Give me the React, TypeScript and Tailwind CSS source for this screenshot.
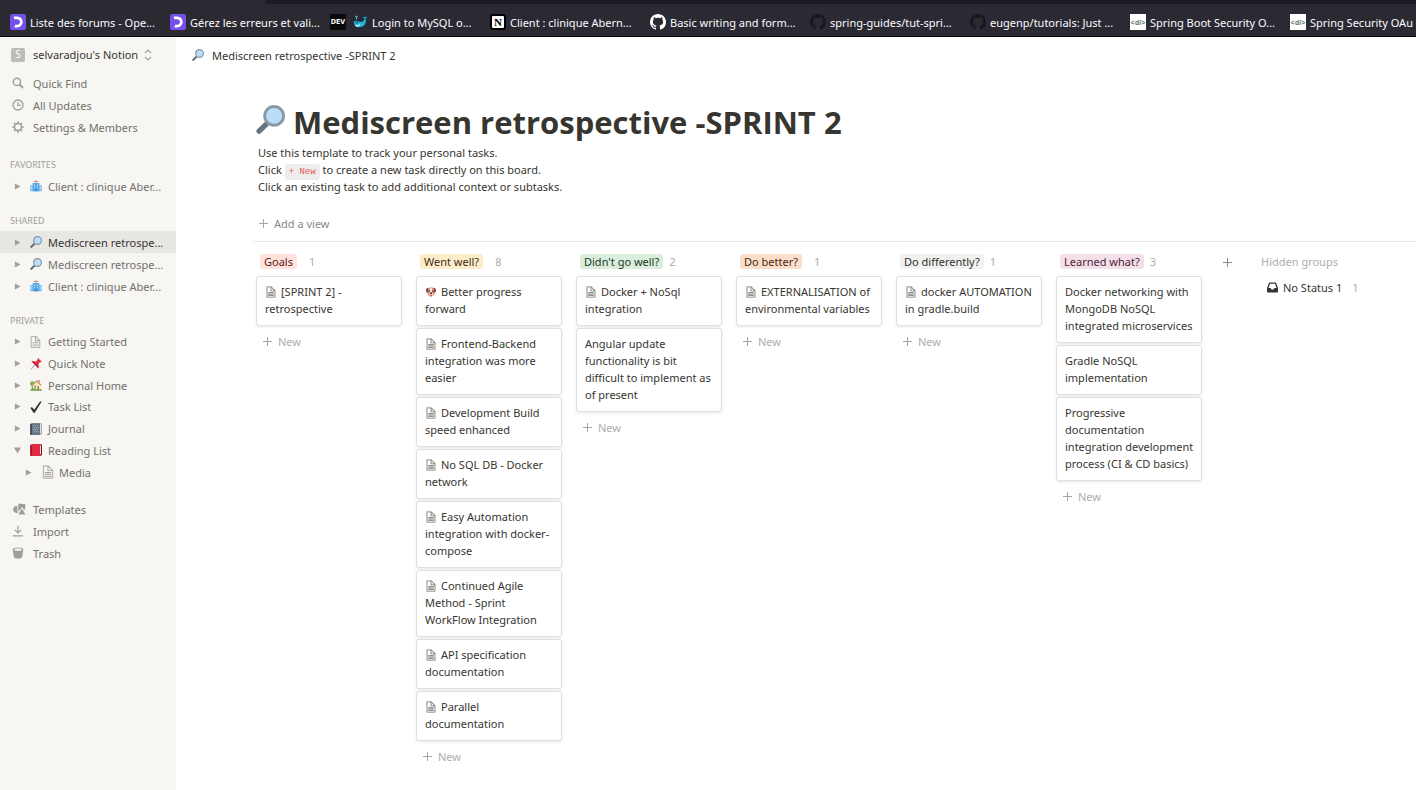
import type { ReactNode } from "react";

const PageIcon = ({ className }: { className: string }) => (
  <svg viewBox="0 0 30 30" className={className} aria-hidden="true">
    <path d="M16,1H4v28h22V11L16,1z M16,3.828L23.172,11H16V3.828z M24,27H6V3h8v10h10V27z M8,17h14v-2H8V17z M8,21h14v-2H8V21z M8,25h14v-2H8V25z" />
  </svg>
);

const Magnifier = ({ className = "size-3" }: { className?: string }) => (
  <svg viewBox="0 0 28 28" className={className} aria-hidden="true">
    <path d="M9.5 16.2l2.3 2.3-1.4 1.6-2.6-2.4z" fill="#8899a6" />
    <path d="M3 25.2l6.3-6" stroke="#66757f" strokeWidth="5.2" strokeLinecap="round" />
    <circle cx="17.5" cy="10.5" r="9.1" fill="#bbddf5" stroke="#8899a6" strokeWidth="2.8" />
  </svg>
);

const Hospital = () => (
  <svg viewBox="0 0 36 36" className="size-3" aria-hidden="true">
    <path d="M0 15h11v19H0zM25 15h11v19H25z" fill="#8cc4f0" />
    <path d="M8 9h20v25H8z" fill="#5aa9e6" />
    <path d="M17 0h2v10h-2z" fill="#8899a6" />
    <path d="M11 3h14v2.500H11z" fill="#e0707c" />
    <path d="M12 14h3v3h-3zM21 14h3v3h-3zM12 20h3v3h-3zM21 20h3v3h-3zM3 19h3v3H3zM3 25h3v3H3zM30 19h3v3h-3zM30 25h3v3h-3z" fill="#d6ecfb" />
    <path d="M15 27h6v7h-6z" fill="#3b88c3" />
  </svg>
);

const Pushpin = () => (
  <svg viewBox="0 0 36 36" className="size-3" aria-hidden="true">
    <path d="M3 34L16 19" stroke="#99aab5" strokeWidth="3" strokeLinecap="round" />
    <path d="M4 10c5-2 10-1 13 1l6-6c-1-2 0-4 1-5l12 12c-2 1-4 1-6 0l-5 7c2 4 2 9 0 13z" fill="#dd2e44" />
    <path d="M10 12l13 13" stroke="#be1931" strokeWidth="3" />
  </svg>
);

const House = () => (
  <svg viewBox="0 0 36 36" className="size-3" aria-hidden="true">
    <circle cx="7" cy="14" r="7" fill="#77b255" />
    <path d="M5 16h4v18H5z" fill="#77b255" />
    <path d="M9 17L20 7l12 10v17H9z" fill="#ffe8b6" />
    <path d="M5 18L20 3l15 14-3 3L20 9 8 20z" fill="#c1a06a" />
    <path d="M25 3h5v9l-5-4z" fill="#d99e82" />
    <path d="M13 20h5v5h-5z" fill="#3b88c3" />
    <path d="M22 22h5v10h-5z" fill="#a8785a" />
    <path d="M1 31h34v4H1z" fill="#5c913b" />
    <circle cx="14" cy="30" r="4" fill="#77b255" />
  </svg>
);

const Check = () => (
  <svg viewBox="0 0 36 36" className="size-3" aria-hidden="true">
    <path d="M34.500 2.500L15 34.500c-1 1.500-4 1.500-5 0L2 22.500c-1-2 2.500-5 5-3l6 6L29.500 2.500c1.500-2 6-2 5 0z" fill="#31373d" />
  </svg>
);

const Book = ({ kind }: { kind: "journal" | "reading" }) => {
  const journal = kind === "journal";
  return (
    <svg viewBox="0 0 36 36" className="size-3" aria-hidden="true">
      <path d="M6 1h27c2 0 3 1 3 3v27c0 3-2 4-4 4H6z" fill={journal ? "#99aab5" : "#a0041e"} />
      <path d="M29 5l4-1v25l-4 3z" fill="#e1e8ed" />
      <path d="M1 4c0-2 1-3 3-3h26v31c0 2-1 4-3 4H4c-2 0-3-1-3-3z" fill={journal ? "#66757f" : "#dd2e44"} />
      <path d="M1 4h4v32H4c-2 0-3-1-3-3z" fill={journal ? "#31373d" : "#a0041e"} />
      {journal && (
        <path d="M8 7h3v3H8zM14 7h3v3h-3zM20 7h3v3h-3zM11 13h3v3h-3zM17 13h3v3h-3zM23 13h3v3h-3zM8 19h3v3H8zM14 19h3v3h-3zM20 19h3v3h-3zM11 25h3v3h-3zM17 25h3v3h-3zM23 25h3v3h-3z" fill="#b8c6d1" />
      )}
    </svg>
  );
};

const Dog = () => (
  <svg viewBox="0 0 36 36" className="mr-[5px] ml-px inline size-2.5 align-[-1px]" aria-hidden="true">
    <path d="M6 5c6-5 18-5 24 0l2 14c0 9-7 16-14 16S4 28 4 19z" fill="#dd8f74" />
    <path d="M15 2h6l2 14-5 4-5-4z" fill="#f5e3d8" />
    <path d="M7 4C2 3 0 9 0 14c0 4 3 7 5 5 3-3 5-10 2-15zM29 4c5-1 7 5 7 10 0 4-3 7-5 5-3-3-5-10-2-15z" fill="#8e3e36" />
    <ellipse cx="18" cy="26" rx="8" ry="8" fill="#f5d3c4" />
    <circle cx="11" cy="15" r="2.600" fill="#292f33" />
    <circle cx="25" cy="15" r="2.600" fill="#292f33" />
    <path d="M13 20h10l-3 5h-4z" fill="#292f33" />
    <path d="M15 28h6v3c0 4-6 4-6 0z" fill="#dd2e44" />
  </svg>
);

const Plus = ({ className = "size-[9px] stroke-[#a5a4a1]" }: { className?: string }) => (
  <svg viewBox="0 0 9 9" className={className} aria-hidden="true">
    <path d="M4.500 0v9M0 4.500h9" />
  </svg>
);

const Caret = ({ open = false }: { open?: boolean }) => (
  <svg viewBox="0 0 8 8" className="size-[7px] fill-[#a09f9b]" aria-hidden="true">
    {open ? <path d="M0 .5h8L4 7.500z" /> : <path d="M1 .5v7L7.500 4z" />}
  </svg>
);

const SearchIcon = () => (
  <svg viewBox="0 0 12 12" className="size-3" fill="none" stroke="#9f9e9a" aria-hidden="true">
    <circle cx="4.900" cy="4.900" r="3.600" strokeWidth="1.500" />
    <path d="M7.600 7.600l3.400 3.400" strokeWidth="1.900" />
  </svg>
);
const ClockIcon = () => (
  <svg viewBox="0 0 12 12" className="size-3" fill="none" stroke="#9f9e9a" strokeWidth="1.300" aria-hidden="true">
    <circle cx="6" cy="6" r="5" />
    <path d="M6 3v3.300h2.800" />
  </svg>
);
const GearIcon = () => (
  <svg viewBox="0 0 12 12" className="size-3" fill="none" stroke="#9f9e9a" aria-hidden="true">
    <circle cx="6" cy="6" r="3.500" strokeWidth="1.500" />
    <path d="M6 .3v2M6 9.700v2M.3 6h2M9.700 6h2M2 2l1.400 1.400M8.600 8.600L10 10M2 10l1.400-1.400M8.600 3.400L10 2" strokeWidth="1.700" />
  </svg>
);
const TemplatesIcon = () => (
  <svg viewBox="0 0 14 12" className="h-3 w-3.5 fill-[#9f9e9a]" aria-hidden="true">
    <path d="M6.500.6l7 .6-.4 5.300-1.200.1-2-2.600-2.300 3.500-1.700-.2z" />
    <path d="M5.300 3v5.300h1.300L5.700 9.700A3.500 3.500 0 1 1 5.300 3z" />
    <path d="M9.900 5.600l3.600 5.900H6.300z" />
  </svg>
);
const ImportIcon = () => (
  <svg viewBox="0 0 12 12" className="size-3" fill="none" stroke="#9f9e9a" strokeWidth="1.200" aria-hidden="true">
    <path d="M6 .8v7M2.800 4.900L6 8l3.200-3.100M.8 10.800h10.400" />
  </svg>
);
const TrashIcon = () => (
  <svg viewBox="0 0 12 12" className="size-3 fill-[#9f9e9a]" aria-hidden="true">
    <path fillRule="evenodd" d="M6 .4c3 0 5.300.8 5.300 2.100L10.200 10c-.2 1-2 1.700-4.200 1.700S2 11 1.800 10L.7 2.500C.7 1.200 3 .4 6 .4zm0 1.200c-2.300 0-3.900.5-3.900 1.100S3.700 3.900 6 3.900s3.900-.5 3.900-1.200S8.300 1.600 6 1.600z" />
  </svg>
);
const InboxIcon = () => (
  <svg viewBox="0 0 12 12" className="size-[11px] fill-[#37352f]" aria-hidden="true">
    <path fillRule="evenodd" d="M2.300.5h7.400L12 6.500v3.800c0 .7-.5 1.200-1.200 1.200H1.200C.5 11.500 0 11 0 10.300V6.500zM3.300 1.800L1.600 6.600h2.500c.2 1.100.9 1.800 1.900 1.800s1.700-.7 1.900-1.800h2.500L8.700 1.800z" />
  </svg>
);

const OpenClassrooms = () => (
  <span className="flex size-4 shrink-0 items-center justify-center rounded-xs bg-[#7451eb]">
    <svg viewBox="0 0 16 16" className="size-4" aria-hidden="true">
      <path d="M3.500 2.500h3.700a5.400 5.400 0 1 1 0 10.900H4.200l1-2.700h2a2.700 2.700 0 0 0 0-5.400H4.300z" fill="#fff" />
    </svg>
  </span>
);
const DevBadge = () => (
  <span className="flex size-4 shrink-0 items-center justify-center overflow-hidden bg-[#0a0a0a] font-['DejaVu_Sans_Condensed','DejaVu_Sans',sans-serif] text-[7px] font-bold text-[#f4f4f4]">
    DEV
  </span>
);
const NotionLogo = () => (
  <span className="flex size-4 shrink-0 items-center justify-center rounded-[3px] border-2 border-black bg-white font-['Liberation_Serif',serif] text-[11px] leading-none font-bold text-black">
    N
  </span>
);
const GitHub = ({ className }: { className: string }) => (
  <svg viewBox="0 0 16 16" className={className} aria-hidden="true">
    <path d="M8 0C3.580 0 0 3.580 0 8c0 3.540 2.290 6.530 5.470 7.590.4.070.55-.17.55-.38 0-.19-.01-.82-.01-1.490-2.010.37-2.530-.49-2.690-.94-.09-.23-.48-.94-.82-1.130-.28-.15-.68-.52-.01-.53.63-.01 1.080.58 1.230.82.72 1.210 1.870.87 2.330.66.070-.52.28-.87.51-1.070-1.780-.2-3.640-.89-3.640-3.950 0-.87.31-1.590.82-2.150-.08-.2-.36-1.020.08-2.120 0 0 .67-.21 2.200.82.64-.18 1.320-.27 2-.27s1.360.09 2 .27c1.530-1.040 2.200-.82 2.200-.82.44 1.100.16 1.920.08 2.120.51.56.82 1.270.82 2.150 0 3.070-1.870 3.750-3.650 3.950.29.25.54.73.54 1.480 0 1.070-.01 1.930-.01 2.200 0 .21.15.46.55.38A8.010 8.010 0 0 0 16 8c0-4.420-3.580-8-8-8z" />
  </svg>
);
const CodeBadge = () => (
  <span className="flex size-4 shrink-0 items-center justify-center bg-white font-['Liberation_Sans',sans-serif] text-[7px] font-bold text-[#6b6b6b]">
    {"<d/>"}
  </span>
);
const Whale = () => (
  <svg viewBox="0 0 15 14" className="mr-1 ml-[3px] inline h-3.5 w-[15px] align-[-2px]" aria-hidden="true">
    <path d="M.5 6c2-.5 5 0 7 .4C10 7 11 5 11.200 3.500L9.500 2c1-.8 2-.5 2.600.1.600-.8 1.800-.8 2.400.2l-1.600 1.300c1.200 4-1 8.900-6.400 8.900C2.500 12.500.5 10 .5 6z" fill="#27b1d6" stroke="#0a2a38" strokeWidth=".7" />
    <path d="M1.500 9.500c2 .6 4.500.6 6-.4-.5 1.800-1.500 2.700-3 2.700-1.400 0-2.400-.9-3-2.300z" fill="#b9e6f4" />
    <path d="M3.500 4.500V2M2 1.500c.8-.6 1.500 0 1.500.8C3.500 1.500 4.300 1 5 1.500" fill="none" stroke="#55c8e8" />
    <circle cx="4" cy="7.800" r=".7" fill="#0a2a38" />
  </svg>
);

const bookmarks: { icon: ReactNode; label: ReactNode }[] = [
  { icon: <OpenClassrooms />, label: "Liste des forums - Ope..." },
  { icon: <OpenClassrooms />, label: "Gérez les erreurs et vali..." },
  { icon: <DevBadge />, label: <><Whale />Login to MySQL o...</> },
  { icon: <NotionLogo />, label: "Client : clinique Abern..." },
  { icon: <GitHub className="size-4 shrink-0 fill-white" />, label: "Basic writing and form..." },
  { icon: <GitHub className="size-4 shrink-0 fill-[#19181d]" />, label: "spring-guides/tut-spri..." },
  { icon: <GitHub className="size-4 shrink-0 fill-[#19181d]" />, label: "eugenp/tutorials: Just ..." },
  { icon: <CodeBadge />, label: "Spring Boot Security O..." },
  { icon: <CodeBadge />, label: "Spring Security OAu" },
];

type Row = { icon: ReactNode; label: string; active?: boolean; open?: boolean; nested?: boolean };

const sections: { title: string; list: string; rows: Row[] }[] = [
  { title: "FAVORITES", list: "grid auto-rows-[22px]", rows: [{ icon: <Hospital />, label: "Client : clinique Aber..." }] },
  {
    title: "SHARED",
    list: "grid auto-rows-[22px]",
    rows: [
      { icon: <Magnifier />, label: "Mediscreen retrospe...", active: true },
      { icon: <Magnifier />, label: "Mediscreen retrospe..." },
      { icon: <Hospital />, label: "Client : clinique Aber..." },
    ],
  },
  {
    title: "PRIVATE",
    list: "grid min-h-[152px] auto-rows-fr",
    rows: [
      { icon: <PageIcon className="size-3.5 fill-[#a5a39f]" />, label: "Getting Started" },
      { icon: <Pushpin />, label: "Quick Note" },
      { icon: <House />, label: "Personal Home" },
      { icon: <Check />, label: "Task List" },
      { icon: <Book kind="journal" />, label: "Journal" },
      { icon: <Book kind="reading" />, label: "Reading List", open: true },
      { icon: <PageIcon className="size-3.5 fill-[#a5a39f]" />, label: "Media", nested: true },
    ],
  },
];

type Card = { text: string; icon?: "page" | "dog" };

const columns: { title: string; count: number; tint: string; gap: string; cards: Card[] }[] = [
  { title: "Goals", count: 1, gap: "gap-3", tint: "bg-[#ffe2dd] text-[#5d1715]", cards: [{ icon: "page", text: "[SPRINT 2] - retrospective" }] },
  {
    title: "Went well?",
    count: 8,
    gap: "gap-3",
    tint: "bg-[#fdecc8] text-[#402c1b]",
    cards: [
      { icon: "dog", text: "Better progress forward" },
      { icon: "page", text: "Frontend-Backend integration was more easier" },
      { icon: "page", text: "Development Build speed enhanced" },
      { icon: "page", text: "No SQL DB - Docker network" },
      { icon: "page", text: "Easy Automation integration with docker-compose" },
      { icon: "page", text: "Continued Agile Method - Sprint WorkFlow Integration" },
      { icon: "page", text: "API specification documentation" },
      { icon: "page", text: "Parallel documentation" },
    ],
  },
  {
    title: "Didn't go well?",
    count: 2,
    gap: "gap-1.5",
    tint: "bg-[#dbeddb] text-[#1c3829]",
    cards: [
      { icon: "page", text: "Docker + NoSql integration" },
      { text: "Angular update functionality is bit difficult to implement as of present" },
    ],
  },
  { title: "Do better?", count: 1, gap: "gap-3", tint: "bg-[#fadec9] text-[#49290e]", cards: [{ icon: "page", text: "EXTERNALISATION of environmental variables" }] },
  { title: "Do differently?", count: 1, gap: "gap-1.5", tint: "bg-[#f1f1ef] text-[#32302c]", cards: [{ icon: "page", text: "docker AUTOMATION in gradle.build" }] },
  {
    title: "Learned what?",
    count: 3,
    gap: "gap-1.5",
    tint: "bg-[#f5e0e9] text-[#4c2337]",
    cards: [
      { text: "Docker networking with MongoDB NoSQL integrated microservices" },
      { text: "Gradle NoSQL implementation" },
      { text: "Progressive documentation integration development process (CI & CD basics)" },
    ],
  },
];

const ToolLink = ({ icon, label }: { icon: ReactNode; label: string }) => (
  <a href="#" className="flex h-[22px] items-center pl-3">
    <span className="flex w-[21px]">{icon}</span>
    {label}
  </a>
);

const SidebarRow = ({ row }: { row: Row }) => (
  <a
    href="#"
    className={`flex items-center whitespace-nowrap ${row.nested ? "pl-[25px]" : "pl-3.5"} ${row.active ? "bg-[#e8e7e4] text-[#37352f]" : ""}`}
  >
    <Caret open={row.open} />
    <span className={`flex justify-center ${row.nested ? "mr-1 ml-2 w-[15px]" : "mr-1.5 ml-2 w-[13px]"}`}>{row.icon}</span>
    {row.label}
  </a>
);

export default function App() {
  return (
    <div className="flex min-h-screen flex-col bg-white font-['Noto_Sans',sans-serif] text-[11px] leading-[17px] text-[#37352f]">
      <header className="border-b border-black bg-[#2b2a33]">
        <div className="ml-[265px] h-1 rounded-bl-sm bg-[#1c1b22]" />
        <nav
          aria-label="Bookmarks"
          className="flex h-8 items-center overflow-hidden pt-1 pl-[10px] text-[#fbfbfe]"
        >
          {bookmarks.map((b, i) => (
            <a key={i} href="#" className="flex w-40 shrink-0 items-center gap-1 whitespace-nowrap last:w-auto">
              {b.icon}
              <span>{b.label}</span>
            </a>
          ))}
        </nav>
      </header>

      <div className="flex flex-1">
        <aside className="w-44 shrink-0 bg-[#f7f6f3] text-[#73716c]">
          <button type="button" className="flex h-[34px] w-full items-center pt-px pl-[11px] text-[#37352f]">
            <span className="mr-2 flex size-3.5 items-center justify-center rounded-xs bg-[#bdbcb8] text-[10px] text-white">S</span>
            selvaradjou's Notion
            <svg viewBox="0 0 8 12" className="ml-1.5 h-3 w-2" fill="none" stroke="#a09f9b" strokeWidth="1.200" aria-hidden="true">
              <path d="M1 4l3-3 3 3M1 8l3 3 3-3" />
            </svg>
          </button>
          <nav className="pt-px pb-[3px]" aria-label="Workspace">
            <ToolLink icon={<SearchIcon />} label="Quick Find" />
            <ToolLink icon={<ClockIcon />} label="All Updates" />
            <ToolLink icon={<GearIcon />} label="Settings & Members" />
          </nav>
          {sections.map((s) => (
            <section key={s.title} className="mt-[13px]">
              <h2 className="pl-2.5 text-[9px] leading-[21px] text-[#a09e99]">{s.title}</h2>
              <div className={s.list}>
                {s.rows.map((r, i) => (
                  <SidebarRow key={i} row={r} />
                ))}
              </div>
            </section>
          ))}
          <nav className="mt-[15px]" aria-label="More">
            <ToolLink icon={<TemplatesIcon />} label="Templates" />
            <ToolLink icon={<ImportIcon />} label="Import" />
            <ToolLink icon={<TrashIcon />} label="Trash" />
          </nav>
        </aside>

        <main className="min-w-0 flex-1 overflow-hidden">
          <div className="flex h-9 items-center gap-2 pl-4">
            <Magnifier />
            <span>Mediscreen retrospective -SPRINT 2</span>
          </div>

          <div className="pt-[29px] pl-20">
            <div className="flex h-[42px] items-start gap-2">
              <Magnifier className="mt-[3px] size-[29px]" />
              <h1 className="font-['Open_Sans',sans-serif] text-[31px] leading-[40px] font-bold whitespace-nowrap">
                Mediscreen retrospective -SPRINT 2
              </h1>
            </div>
            <div className="pl-0.5">
              <p>Use this template to track your personal tasks.</p>
              <p>
                Click{" "}
                <code className="rounded-[3px] bg-[#eeedec] px-1 py-[3px] font-['Liberation_Mono',monospace] text-[9px] leading-none text-[#eb5757]">
                  + New
                </code>{" "}
                to create a new task directly on this board.
              </p>
              <p>Click an existing task to add additional context or subtasks.</p>
            </div>
          </div>

          <div className="ml-[77px] border-b border-[#e9e9e7] pt-5 pb-[9px] pl-1.5">
            <button type="button" className="flex items-center gap-1.5 text-[#8a8884]">
              <Plus />
              Add a view
            </button>
          </div>

          <div className="flex gap-3.5 pt-3 pl-20">
            {columns.map((c) => (
              <section key={c.title} className="w-[146px] shrink-0">
                <div className={`flex h-[22px] items-start pl-1 ${c.gap}`}>
                  <h2 className={`max-w-[84px] overflow-hidden rounded-[3px] px-1 leading-[15px] whitespace-nowrap ${c.tint}`}>{c.title}</h2>
                  <span className="leading-[15px] text-[#aeada9]">{c.count}</span>
                </div>
                <div className="flex flex-col gap-0.5">
                  {c.cards.map((card) => (
                    <a
                      key={card.text}
                      href="#"
                      className="block rounded-[3px] border border-[#e0e0df] bg-white pt-1.5 pr-1 pb-2 pl-2 shadow-[0_1px_3px_rgba(15,15,15,0.1)]"
                    >
                      {card.icon === "page" && <PageIcon className="mr-1 inline size-3 fill-[#6f6e69] align-[-2px]" />}
                      {card.icon === "dog" && <Dog />}
                      {card.text}
                    </a>
                  ))}
                </div>
                <button type="button" className="mt-[3px] flex h-6 items-center gap-1.5 pl-[7px] text-[#aeada9]">
                  <Plus />
                  New
                </button>
              </section>
            ))}
            <button type="button" aria-label="Add a group" className="flex h-4 shrink-0 items-center pl-[7px]">
              <Plus className="size-[9px] stroke-[#8a8884]" />
            </button>
            <section className="ml-[15px] shrink-0">
              <h2 className="leading-[15px] text-[#aeada9]">Hidden groups</h2>
              <a href="#" className="mt-2.5 flex items-center pl-1.5">
                <InboxIcon />
                <span className="ml-[5px]">No Status 1</span>
                <span className="ml-2.5 text-[#aeada9]">1</span>
              </a>
            </section>
          </div>
        </main>
      </div>
    </div>
  );
}
